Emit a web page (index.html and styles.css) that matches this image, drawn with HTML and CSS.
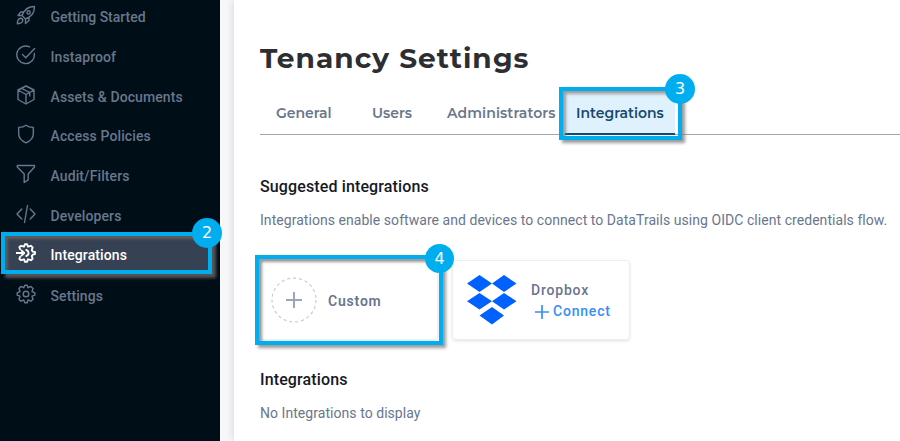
FILE: index.html
```html
<!DOCTYPE html>
<html lang="en">
<head>
<meta charset="utf-8">
<title>Tenancy Settings</title>
<link rel="stylesheet" href="styles.css">
</head>
<body>
<div class="app">
  <nav class="sidebar">
    <a class="item started"><svg viewBox="0 0 20 20"><path d="M6 10.5C8 5 12 1.5 18.5 1.5C18.5 8 15 12 9.5 14ZM8 7H4.8L2 10.5L6 10.5M13 12V15.5L9.5 18.5V14M4.5 13.2C2 13.5 1.5 16 1.3 18.7C4 18.5 6.5 18 6.8 15.5C6.8 14 5.8 13.2 4.5 13.2Z"/><circle cx="12.6" cy="7.4" r="1.6"/></svg><span>Getting Started</span></a>
    <a class="item proof"><svg viewBox="0 0 20 20"><path d="M18.3 8.5A8.8 8.8 0 1 1 13.5 1.9M6.5 9.5L9.8 12.8L18.6 3.5"/></svg><span>Instaproof</span></a>
    <a class="item assets"><svg viewBox="0 0 20 20"><path d="M10 1L18 5V14.5L10 19L2 14.5V5ZM2 5L10 9.5L18 5M10 9.5V19M5.5 3.3L13.8 7.5V11"/></svg><span>Assets &amp; Documents</span></a>
    <a class="item access"><svg viewBox="0 0 20 20"><path d="M10 1.2C12 2.7 14.5 3.3 17.3 3.4V10C17.3 14 14 17 10 18.8C6 17 2.7 14 2.7 10V3.4C5.5 3.3 8 2.7 10 1.2Z"/></svg><span>Access Policies</span></a>
    <a class="item audit"><svg viewBox="0 0 20 20"><path d="M1.3 1.5H18.5V3L12.2 10V15.8L8.2 18.5V10L1.3 3Z"/></svg><span>Audit/Filters</span></a>
    <a class="item developers"><svg viewBox="0 0 20 20"><path d="M5.8 5L1 10L5.8 15M14.2 5L19 10L14.2 15M11.5 1.5L8.5 18.5"/></svg><span>Developers</span></a>
    <a class="item active"><svg viewBox="0 0 20 20"><path d="M4 6L3.4 4L5 2.8L8 3.6L9 1.2H11L12 3.6L15 2.8L16.6 4.4L15.8 7.2L16.8 8.6L19 9V11L16.8 11.6L15.8 13L16.6 15.8L15 17.2L12 16.3L11 18.8H9L8 16.3L5 17.2L3.4 16L4 14M0 10H8M5.5 7.4L8.2 10L5.5 12.6M10.3 7C13.4 8.2 13.4 11.8 10.3 13"/></svg><span>Integrations</span></a>
    <a class="item settings"><svg viewBox="0 0 20 20"><path d="M8.8 1.2H11.2L12 3.7L15 2.5L17 4.5L16 7.5L18.8 8.8V11.2L16 12.2L17 15.3L15 17.2L12 16L11.2 18.8H8.8L7.8 16L4.8 17.2L3 15.3L4 12.2L1.2 11.2V8.8L4 7.5L3 4.5L4.8 2.5L7.8 3.7Z"/><circle cx="10" cy="10" r="2.8"/></svg><span>Settings</span></a>
  </nav>
  <main class="content">
    <h1><span>Tenancy Settings</span></h1>
    <div class="tabs">
      <a class="tab general"><span>General</span></a>
      <a class="tab users"><span>Users</span></a>
      <a class="tab admins"><span>Administrators</span></a>
      <a class="tab selected"><span>Integrations</span></a>
    </div>
    <h2 class="suggested"><span>Suggested integrations</span></h2>
    <p class="intro"><span>Integrations enable software and devices to connect to DataTrails using OIDC client credentials flow.</span></p>
    <div class="cards">
      <div class="card">
        <svg class="add" viewBox="0 0 46 46"><circle cx="23" cy="23" r="22"/><path d="M15 23H31M23 15V31"/></svg>
        <span class="custom">Custom</span>
      </div>
      <div class="card dropbox">
        <svg class="logo" viewBox="0 0 50 50"><path d="M12.5 0L25 8.5L12.5 17L0 8.5ZM37 0L49.5 8.5L37 17L25 8.5ZM12.5 18L25 26.2L12.5 34.5L0 26.2ZM37 18L49.5 26.2L37 34.5L25 26.2ZM25 32L37 40.5L25 49.5L12.5 40.5Z"/></svg>
        <div class="details">
          <span class="name">Dropbox</span>
          <div class="connect"><svg viewBox="0 0 14 14"><path d="M0 7H14M7 0V14"/></svg><span>Connect</span></div>
        </div>
      </div>
    </div>
    <h2 class="existing"><span>Integrations</span></h2>
    <p class="empty"><span>No Integrations to display</span></p>
  </main>
</div>
<div class="callout callout-menu"><b>2</b></div>
<div class="callout callout-tab"><b>3</b></div>
<div class="callout callout-card"><b>4</b></div>
</body>
</html>
```
FILE: styles.css
```css
* { box-sizing: border-box; }
body { margin: 0; width: 900px; height: 441px; overflow: hidden; font-family: Roboto, sans-serif; background: #f7f7fa; }
.app { display: flex; height: 441px; }
.sidebar { width: 220px; flex: none; background: #000e17; display: grid; grid-template-rows: 37px 40px 39px 40px 40px 39px 39px 43px; align-content: start; }
.item { display: flex; align-items: center; padding-left: 16px; gap: 14.5px; font-size: 14px; font-weight: 500; color: #69768d; white-space: nowrap; letter-spacing: .1px; }
.item svg { width: 20px; height: 20px; flex: none; fill: none; stroke: currentColor; stroke-width: 1.4; stroke-linejoin: round; stroke-linecap: round; position: relative; top: -2px; }
.item.active { color: #fff; background: #364154; margin: 1px 12px 0 1px; padding-left: 15px; }
.item.active svg { stroke-width: 1.9; }
.item.started { letter-spacing: 0; padding-bottom: 4px; }
.content { margin-left: 14px; flex: 1; min-width: 0; background: #fff; padding-left: 26px; box-shadow: 0 0 8px #cfd0d6; }
h1 { margin: 0; height: 94px; padding-top: 40px; font: 700 28px/36px Montserrat, Inter, sans-serif; color: #2c2e31; letter-spacing: 1.05px; white-space: nowrap; }
.tabs { height: 41px; border-bottom: 1px solid #a6a6a6; display: flex; font: 600 14px/38px Montserrat, Inter, sans-serif; color: #69768d; }
.tab { white-space: nowrap; height: 41px; }
.general { width: 112px; padding-left: 16px; }
.users { width: 75px; }
.admins { width: 118px; letter-spacing: .1px; }
.selected { width: 110px; padding-left: 11px; color: #174a6d; background: #e0f1fe; border-bottom: 2px solid #104b70; }
h2 { margin: 0; font-size: 16px; line-height: 22px; font-weight: 500; color: #15191f; letter-spacing: .13px; }
.suggested { margin-top: 41px; }
p { margin: 0; font-size: 14px; line-height: 20px; color: #69768d; white-space: nowrap; letter-spacing: .05px; }
.intro { margin-top: 12px; }
.cards { display: flex; gap: 14px; margin-top: 30px; }
.card { width: 178px; height: 80px; border: 1px solid #eceef2; border-radius: 4px; box-shadow: 0 1px 3px #dfe1e6; display: flex; align-items: center; padding-left: 10px; color: #69768d; font-size: 14px; font-weight: 600; }
.custom { letter-spacing: .8px; padding-top: 1px; }
.add { width: 46px; height: 46px; margin-right: 11px; fill: none; stroke: #9ca5b9; stroke-width: 2; }
.add circle { stroke: #cbd0dc; stroke-width: 1.3; stroke-dasharray: 3.2 2.8; }
.dropbox { padding-left: 14px; }
.logo { width: 50px; height: 50px; fill: #0061fe; margin-right: 14px; }
.details { line-height: 21px; padding-top: 2px; }
.name { font-weight: 500; letter-spacing: .8px; }
.connect { display: flex; align-items: center; gap: 4px; padding-left: 4px; color: #368ff5; font-weight: 500; letter-spacing: .8px; }
.connect svg { width: 14px; height: 14px; stroke: currentColor; stroke-width: 1.7; }
.existing { margin-top: 29px; }
.empty { margin-top: 12px; }
.callout { position: absolute; border: 4px solid #00adef; box-shadow: 3px 3px 3px #777b, inset 3px 3px 3px #777b; }
.callout-menu { box-shadow: 4px 4px 3px #555, inset 3px 3px 3px #5f5f5f; }
.callout b { position: absolute; width: 30px; height: 30px; border-radius: 50%; background: #00adef; color: #fff; font: 400 16px/30px "DejaVu Sans", sans-serif; text-align: center; }
.callout-menu { left: 1px; top: 232px; width: 211px; height: 42px; }
.callout-menu b { left: 187px; top: -18px; }
.callout-tab { left: 559px; top: 87px; width: 123px; height: 53px; }
.callout-tab b { left: 102px; top: -17px; }
.callout-card { left: 255px; top: 255px; width: 188px; height: 90px; }
.callout-card b { left: 166px; top: -15px; width: 29px; height: 29px; line-height: 29px; }
```
